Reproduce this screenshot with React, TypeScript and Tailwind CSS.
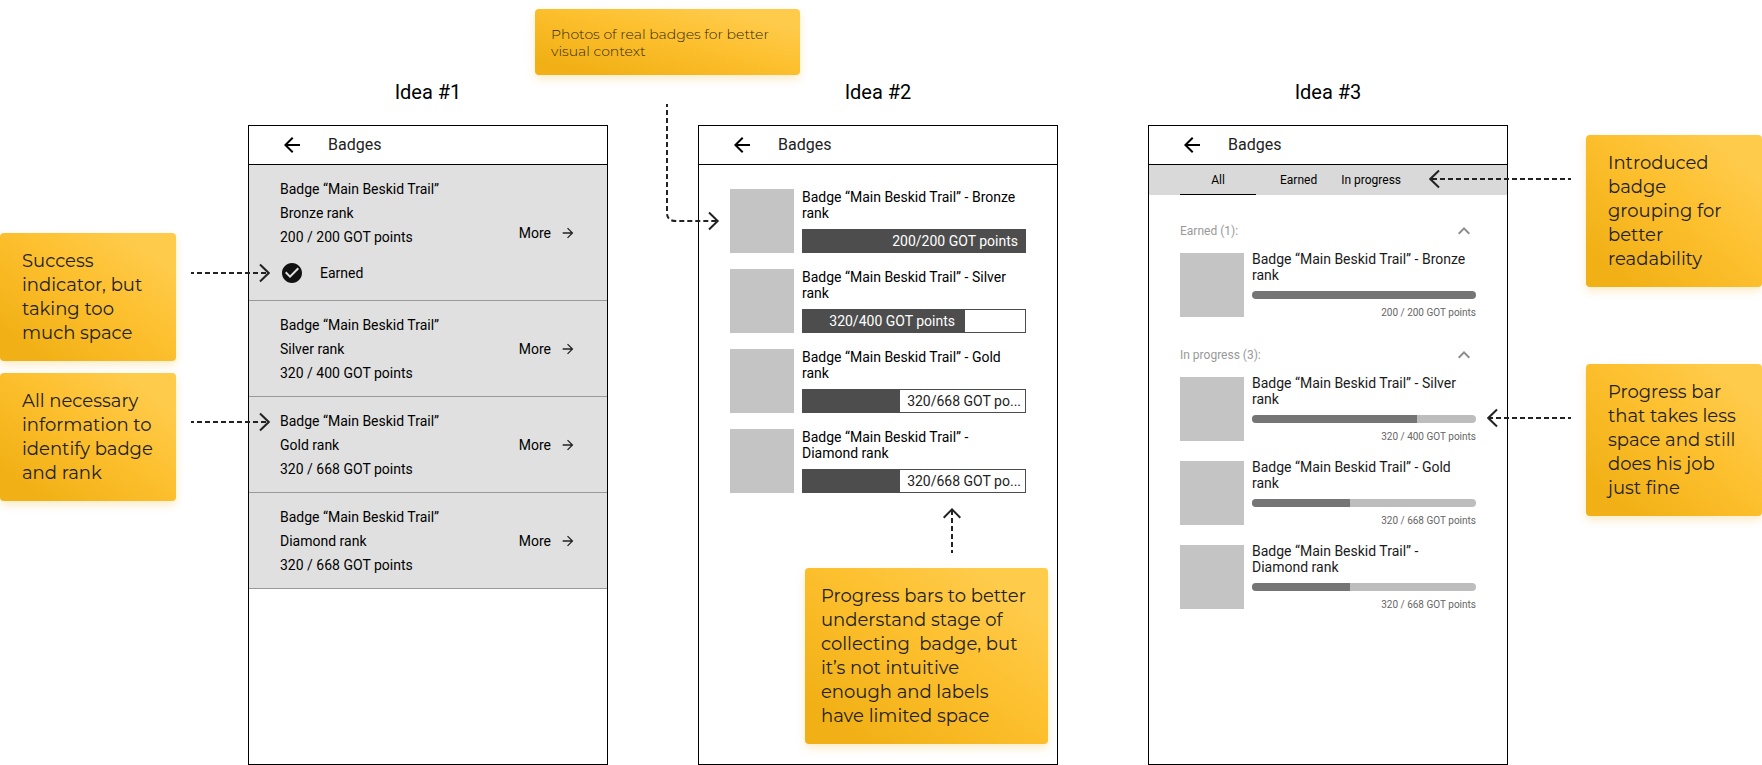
import type { ReactNode } from "react";
import { clsx } from "clsx";
import { MdArrowBack, MdArrowForward, MdCheckCircle, MdExpandLess } from "react-icons/md";

type Badge = { rank: string; current: number; goal: number; fill: number; short?: string };

const badges: Badge[] = [
  { rank: "Bronze", current: 200, goal: 200, fill: 100 },
  { rank: "Silver", current: 320, goal: 400, fill: 73.5 },
  { rank: "Gold", current: 320, goal: 668, fill: 43.75, short: "320/668 GOT po..." },
  { rank: "Diamond", current: 320, goal: 668, fill: 43.75, short: "320/668 GOT po..." },
];

const TRAIL = "Badge “Main Beskid Trail”";

function Note({ children, small = false, className = "" }: { children: ReactNode; small?: boolean; className?: string }) {
  return (
    <p
      className={clsx(
        "rounded bg-[linear-gradient(to_top_right,#f1b015_12%,#fdc02f_55%,#ffcb4b_85%)] font-['Montserrat','Inter',sans-serif] whitespace-pre-wrap shadow-[0_4px_8px_rgba(245,180,30,0.25)]",
        small ? "pt-[17px] pb-[15px] text-sm leading-[17px] font-light text-[#33290f]" : "py-4 text-lg leading-6 font-normal text-[#222]",
        className,
      )}
    >
      {children}
    </p>
  );
}

function DashedArrow({ length, className }: { length: number; className: string }) {
  return (
    <svg width={length} height="20" viewBox={`0 0 ${length} 20`} fill="none" stroke="#222" strokeWidth="2" className={className} aria-hidden="true">
      <path d={`M0 10H${length - 2}`} strokeDasharray="5 3" strokeDashoffset="2" />
      <path d={`M${length - 10} 1.5L${length - 1.3} 10L${length - 10} 18.5`} />
    </svg>
  );
}

function Idea({ number, children, overlay }: { number: number; children: ReactNode; overlay: ReactNode }) {
  return (
    <section className="relative flex min-w-0 flex-1 flex-col pt-20">
      <h2 className="mb-[21px] text-center text-xl leading-6">Idea #{number}</h2>
      <div className="relative flex flex-1 flex-col border border-black">
        <header className="flex items-center gap-6 border-b border-black px-[31px] py-[7px]">
          <button type="button" aria-label="Back">
            <MdArrowBack size={24} />
          </button>
          <h3 className="text-base leading-6 text-[#222]">Badges</h3>
        </header>
        {children}
        {overlay}
      </div>
    </section>
  );
}

function Thumb() {
  return <div className="size-16 shrink-0 bg-[#c4c4c4]" />;
}

function ListRow({ badge }: { badge: Badge }) {
  const earned = badge.current === badge.goal;
  return (
    <li className={clsx("flex items-center justify-between border-b border-[#999] bg-[#e0e0e0] px-[31px] pt-3 text-sm leading-6", earned ? "pb-[15px]" : "pb-[11px]")}>
      <div>
        <p>{TRAIL}</p>
        <p>{badge.rank} rank</p>
        <p>
          {badge.current} / {badge.goal} GOT points
        </p>
        {earned && (
          <p className="mt-3 flex items-center gap-4">
            <MdCheckCircle size={24} color="#111" />
            Earned
          </p>
        )}
      </div>
      <a href="#more" className={clsx("flex items-center gap-[9px]", earned && "pt-1")}>
        More
        <MdArrowForward size={16} color="#222" />
      </a>
    </li>
  );
}

function BarRow({ badge }: { badge: Badge }) {
  const inside = badge.fill > 50;
  const label = badge.short ?? `${badge.current}/${badge.goal} GOT points`;
  return (
    <li className="flex gap-2">
      <Thumb />
      <div className="min-w-0 flex-1">
        <p className="text-sm leading-4">
          {TRAIL} - {badge.rank} rank
        </p>
        <div className="mt-2 flex h-6 border border-[#4d4d4d] text-sm leading-[22px]">
          <div className={clsx("shrink-0 bg-[#4d4d4d] text-right text-white", badge.fill === 100 ? "pr-[7px]" : "pr-[10px]")} style={{ width: `${badge.fill - (badge.fill === 73.5 ? 0.5 : 0)}%` }}>
            {inside && label}
          </div>
          {!inside && <div className="flex-1 pl-[7px] whitespace-nowrap text-[#222]">{label}</div>}
        </div>
      </div>
    </li>
  );
}

function SlimRow({ badge }: { badge: Badge }) {
  return (
    <li className="flex items-center gap-2">
      <Thumb />
      <div className="min-w-0 flex-1">
        <p className="text-sm leading-4 text-[#1a1a1a]">
          {TRAIL} - {badge.rank} rank
        </p>
        <div className="mt-2 h-2 overflow-hidden rounded-full bg-[#bdbdbd]">
          <div className="h-full bg-[#757575]" style={{ width: `${badge.fill}%` }} />
        </div>
        <p className="mt-2 text-right text-[10px] leading-3 text-[#666]">
          {badge.current} / {badge.goal} GOT points
        </p>
      </div>
    </li>
  );
}

function Group({ title, items }: { title: string; items: Badge[] }) {
  return (
    <div>
      <button type="button" className="flex w-full items-center justify-between text-xs leading-6 text-[#999]">
        {title} ({items.length}):
        <MdExpandLess size={24} color="#8c8c8c" />
      </button>
      <ul className="mt-2 flex flex-col gap-4">
        {items.map((b) => (
          <SlimRow key={b.rank} badge={b} />
        ))}
      </ul>
    </div>
  );
}

export default function App() {
  return (
    <main className="flex min-h-screen bg-white font-['Roboto',sans-serif] text-black">
      <aside className="flex w-44 shrink-0 flex-col gap-3 pt-[233px]">
        <Note className="pl-[22px]">{"Success\nindicator, but\ntaking too\nmuch space"}</Note>
        <Note className="pl-[22px]">{"All necessary\ninformation to\nidentify badge\nand rank"}</Note>
      </aside>

      <div className="mr-[78px] ml-[72px] flex min-w-0 flex-1 gap-[90px]">
        <Idea
          number={1}
          overlay={
            <>
              <DashedArrow length={79} className="absolute top-[137px] -left-[58px]" />
              <DashedArrow length={79} className="absolute top-[286px] -left-[58px]" />
            </>
          }
        >
          <ul>
            {badges.map((b) => (
              <ListRow key={b.rank} badge={b} />
            ))}
          </ul>
        </Idea>

        <Idea
          number={2}
          overlay={
            <>
              <Note small className="absolute -top-[117px] -left-[164px] w-[265px] px-4">
                {"Photos of real badges for better\nvisual context"}
              </Note>
              <svg width="54" height="128" viewBox="0 0 54 128" fill="none" stroke="#222" strokeWidth="2" className="absolute -top-[22px] -left-[33px]" aria-hidden="true">
                <path d="M1 0V109Q1 117 10 117H50" strokeDasharray="5 3" strokeDashoffset="2" />
                <path d="M43 108.5L51.7 117L43 125.5" />
              </svg>
            </>
          }
        >
          <ul className="flex flex-col gap-4 px-[31px] pt-6">
            {badges.map((b) => (
              <BarRow key={b.rank} badge={b} />
            ))}
          </ul>
          <div className="mt-[15px] mr-[9px] mb-5 flex flex-col items-end">
            <svg width="18" height="45" viewBox="0 0 18 45" fill="none" stroke="#222" strokeWidth="2" className="mr-[87px]" aria-hidden="true">
              <path d="M9 45V2" strokeDasharray="5 3" strokeDashoffset="2" />
              <path d="M0.7 9.8L9 1.4L17.3 9.8" />
            </svg>
            <Note className="mt-[15px] w-[243px] px-4">
              {"Progress bars to better\nunderstand stage of\ncollecting  badge, but\nit’s not intuitive\nenough and labels\nhave limited space"}
            </Note>
          </div>
        </Idea>

        <Idea
          number={3}
          overlay={
            <>
              <DashedArrow length={142} className="absolute top-[43px] -right-[64px] rotate-180" />
              <DashedArrow length={84} className="absolute top-[282px] -right-[64px] rotate-180" />
            </>
          }
        >
          <nav className="flex gap-6 bg-[#d9d9d9] px-[31px] text-xs leading-[30px]">
            <button type="button" className="w-[76px] shadow-[inset_0_-1px_0_#000]">
              All
            </button>
            <button type="button">Earned</button>
            <button type="button">In progress</button>
          </nav>
          <div className="flex flex-col gap-6 px-[31px] py-6">
            <Group title="Earned" items={badges.slice(0, 1)} />
            <Group title="In progress" items={badges.slice(1)} />
          </div>
        </Idea>
      </div>

      <aside className="flex w-44 shrink-0 flex-col gap-[77px] pt-[135px]">
        <Note className="pl-[22px]">{"Introduced\nbadge\ngrouping for\nbetter\nreadability"}</Note>
        <Note className="pl-[22px]">{"Progress bar\nthat takes less\nspace and still\ndoes his job\njust fine"}</Note>
      </aside>
    </main>
  );
}
